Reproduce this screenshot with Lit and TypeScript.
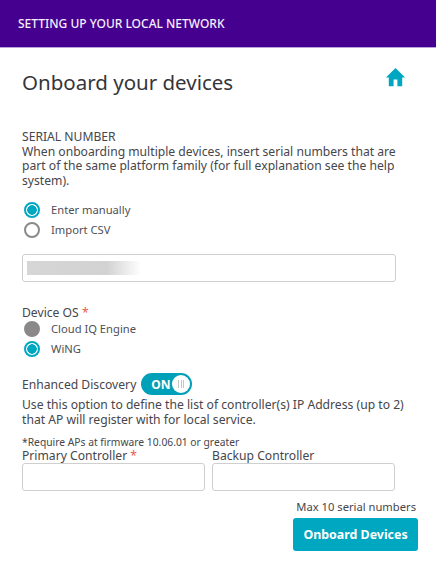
import { LitElement, html, css, svg } from "lit";
import { customElement } from "lit/decorators.js";

@customElement("app-root")
export class AppRoot extends LitElement {
  static styles = css`
    :host { display: block; width: 436px; height: 571px; background: #fff; overflow: hidden;
      font-family: "Noto Sans", "Open Sans", sans-serif; font-size: 12.15px; color: #46464b; }
    * { box-sizing: border-box; }
    .hdr { height: 48px; background: #46008f; border-bottom: 1px solid #b9a3dc; color: #f4effa;
      font-size: 12px; font-weight: 500; display: flex; align-items: center; padding: 0 18px 1px; }
    .body { padding: 0 18px 0 22px; }
    .titlerow { display: flex; justify-content: space-between; align-items: flex-start; height: 82px; }
    h1 { margin: 18px 0 0; font-size: 20.5px; font-weight: 400; line-height: 32px; color: #35353a; }
    .home { margin: 18px 11px 0 0; width: 23px; height: 23px; display: block; }
    .para { line-height: 14.5px; }
    .radios { display: flex; flex-direction: column; gap: 1px; margin-top: 12px; padding-left: 1.5px; }
    .radios.os { margin-top: -2px; }
    .r { display: flex; align-items: center; gap: 11.5px; height: 19px; font-size: 11.2px; color: #4f4f55; }
    .dot { width: 16px; height: 16px; border-radius: 50%; border: 2px solid #8a8a8a; background: #fff; flex: none; }
    .dot.on { border-color: #00a7c1; background: radial-gradient(circle, #00a7c1 0 4.5px, #fff 5px); }
    .dot.dis { background: #8a8888; border-color: #8a8888; }
    .inp { height: 28px; border: 1px solid #cfcfcf; border-radius: 3px; background: #fff; }
    .serial { width: 374px; margin-top: 15px; padding: 6px 4px; }
    .blur { width: 114px; height: 14px; background: linear-gradient(90deg, #d6d6d6, #d2d2d2 70%, #ffffff); }
    .oslabel { margin-top: 23px; line-height: 16px; }
    .req { color: #f0584f; }
    .disc { display: flex; align-items: center; gap: 5px; margin-top: 15px; height: 22px; }
    .toggle { width: 51px; height: 22px; border-radius: 11px; background: #00a0b8; color: #fff; font-weight: 700;
      font-size: 12px; display: flex; align-items: center; justify-content: space-between; padding: 0 2px 0 10px; }
    .knob { width: 18px; height: 18px; border-radius: 50%; background: #fff; display: flex; align-items: center;
      justify-content: center; gap: 1.5px; }
    .knob i { width: 1px; height: 8px; background: #c4c4c4; }
    .use { margin-top: 3px; }
    .note { margin-top: 8px; font-size: 10.3px; line-height: 14px; }
    .ctrls { display: grid; grid-template-columns: 183px 183px; gap: 7px; }
    .ctrls label { display: block; line-height: 14px; }
    .ctrls .inp { display: block; }
    .max { text-align: right; margin-top: 8px; font-size: 11.2px; line-height: 16px; padding-right: 2px; }
    .actions { display: flex; justify-content: flex-end; margin-top: 3px; }
    button { width: 125px; height: 33px; border: 0; border-radius: 3px; background: #00a7c1; color: #fff;
      font: 700 12.4px "Noto Sans", sans-serif; padding: 0; }
  `;

  private radio(label: string, kind: string) {
    return html`<div class="r"><span class="dot ${kind}"></span>${label}</div>`;
  }

  render() {
    return html`
      <div class="hdr">SETTING UP YOUR LOCAL NETWORK</div>
      <div class="body">
        <div class="titlerow">
          <h1>Onboard your devices</h1>
          <svg class="home" viewBox="0 0 24 24" fill="#00a7c1">${svg`<path d="M10 21v-7h4v7h5v-9h3L12 2 2 12h3v9z"/>`}</svg>
        </div>
        <div class="para">SERIAL NUMBER<br />When onboarding multiple devices, insert serial numbers that are
          part of the same platform family (for full explanation see the help system).</div>
        <div class="radios">
          ${this.radio("Enter manually", "on")}
          ${this.radio("Import CSV", "")}
        </div>
        <div class="inp serial"><div class="blur"></div></div>
        <div class="oslabel">Device OS <span class="req">*</span></div>
        <div class="radios os">
          ${this.radio("Cloud IQ Engine", "dis")}
          ${this.radio("WiNG", "on")}
        </div>
        <div class="disc">Enhanced Discovery
          <div class="toggle">ON<span class="knob"><i></i><i></i><i></i></span></div>
        </div>
        <div class="para use">Use this option to define the list of controller(s) IP Address (up to 2)
          that AP will register with for local service.</div>
        <div class="note">*Require APs at firmware 10.06.01 or greater</div>
        <div class="ctrls">
          <div><label>Primary Controller <span class="req">*</span></label><div class="inp"></div></div>
          <div><label>Backup Controller</label><div class="inp"></div></div>
        </div>
        <div class="max">Max 10 serial numbers</div>
        <div class="actions"><button>Onboard Devices</button></div>
      </div>`;
  }
}
